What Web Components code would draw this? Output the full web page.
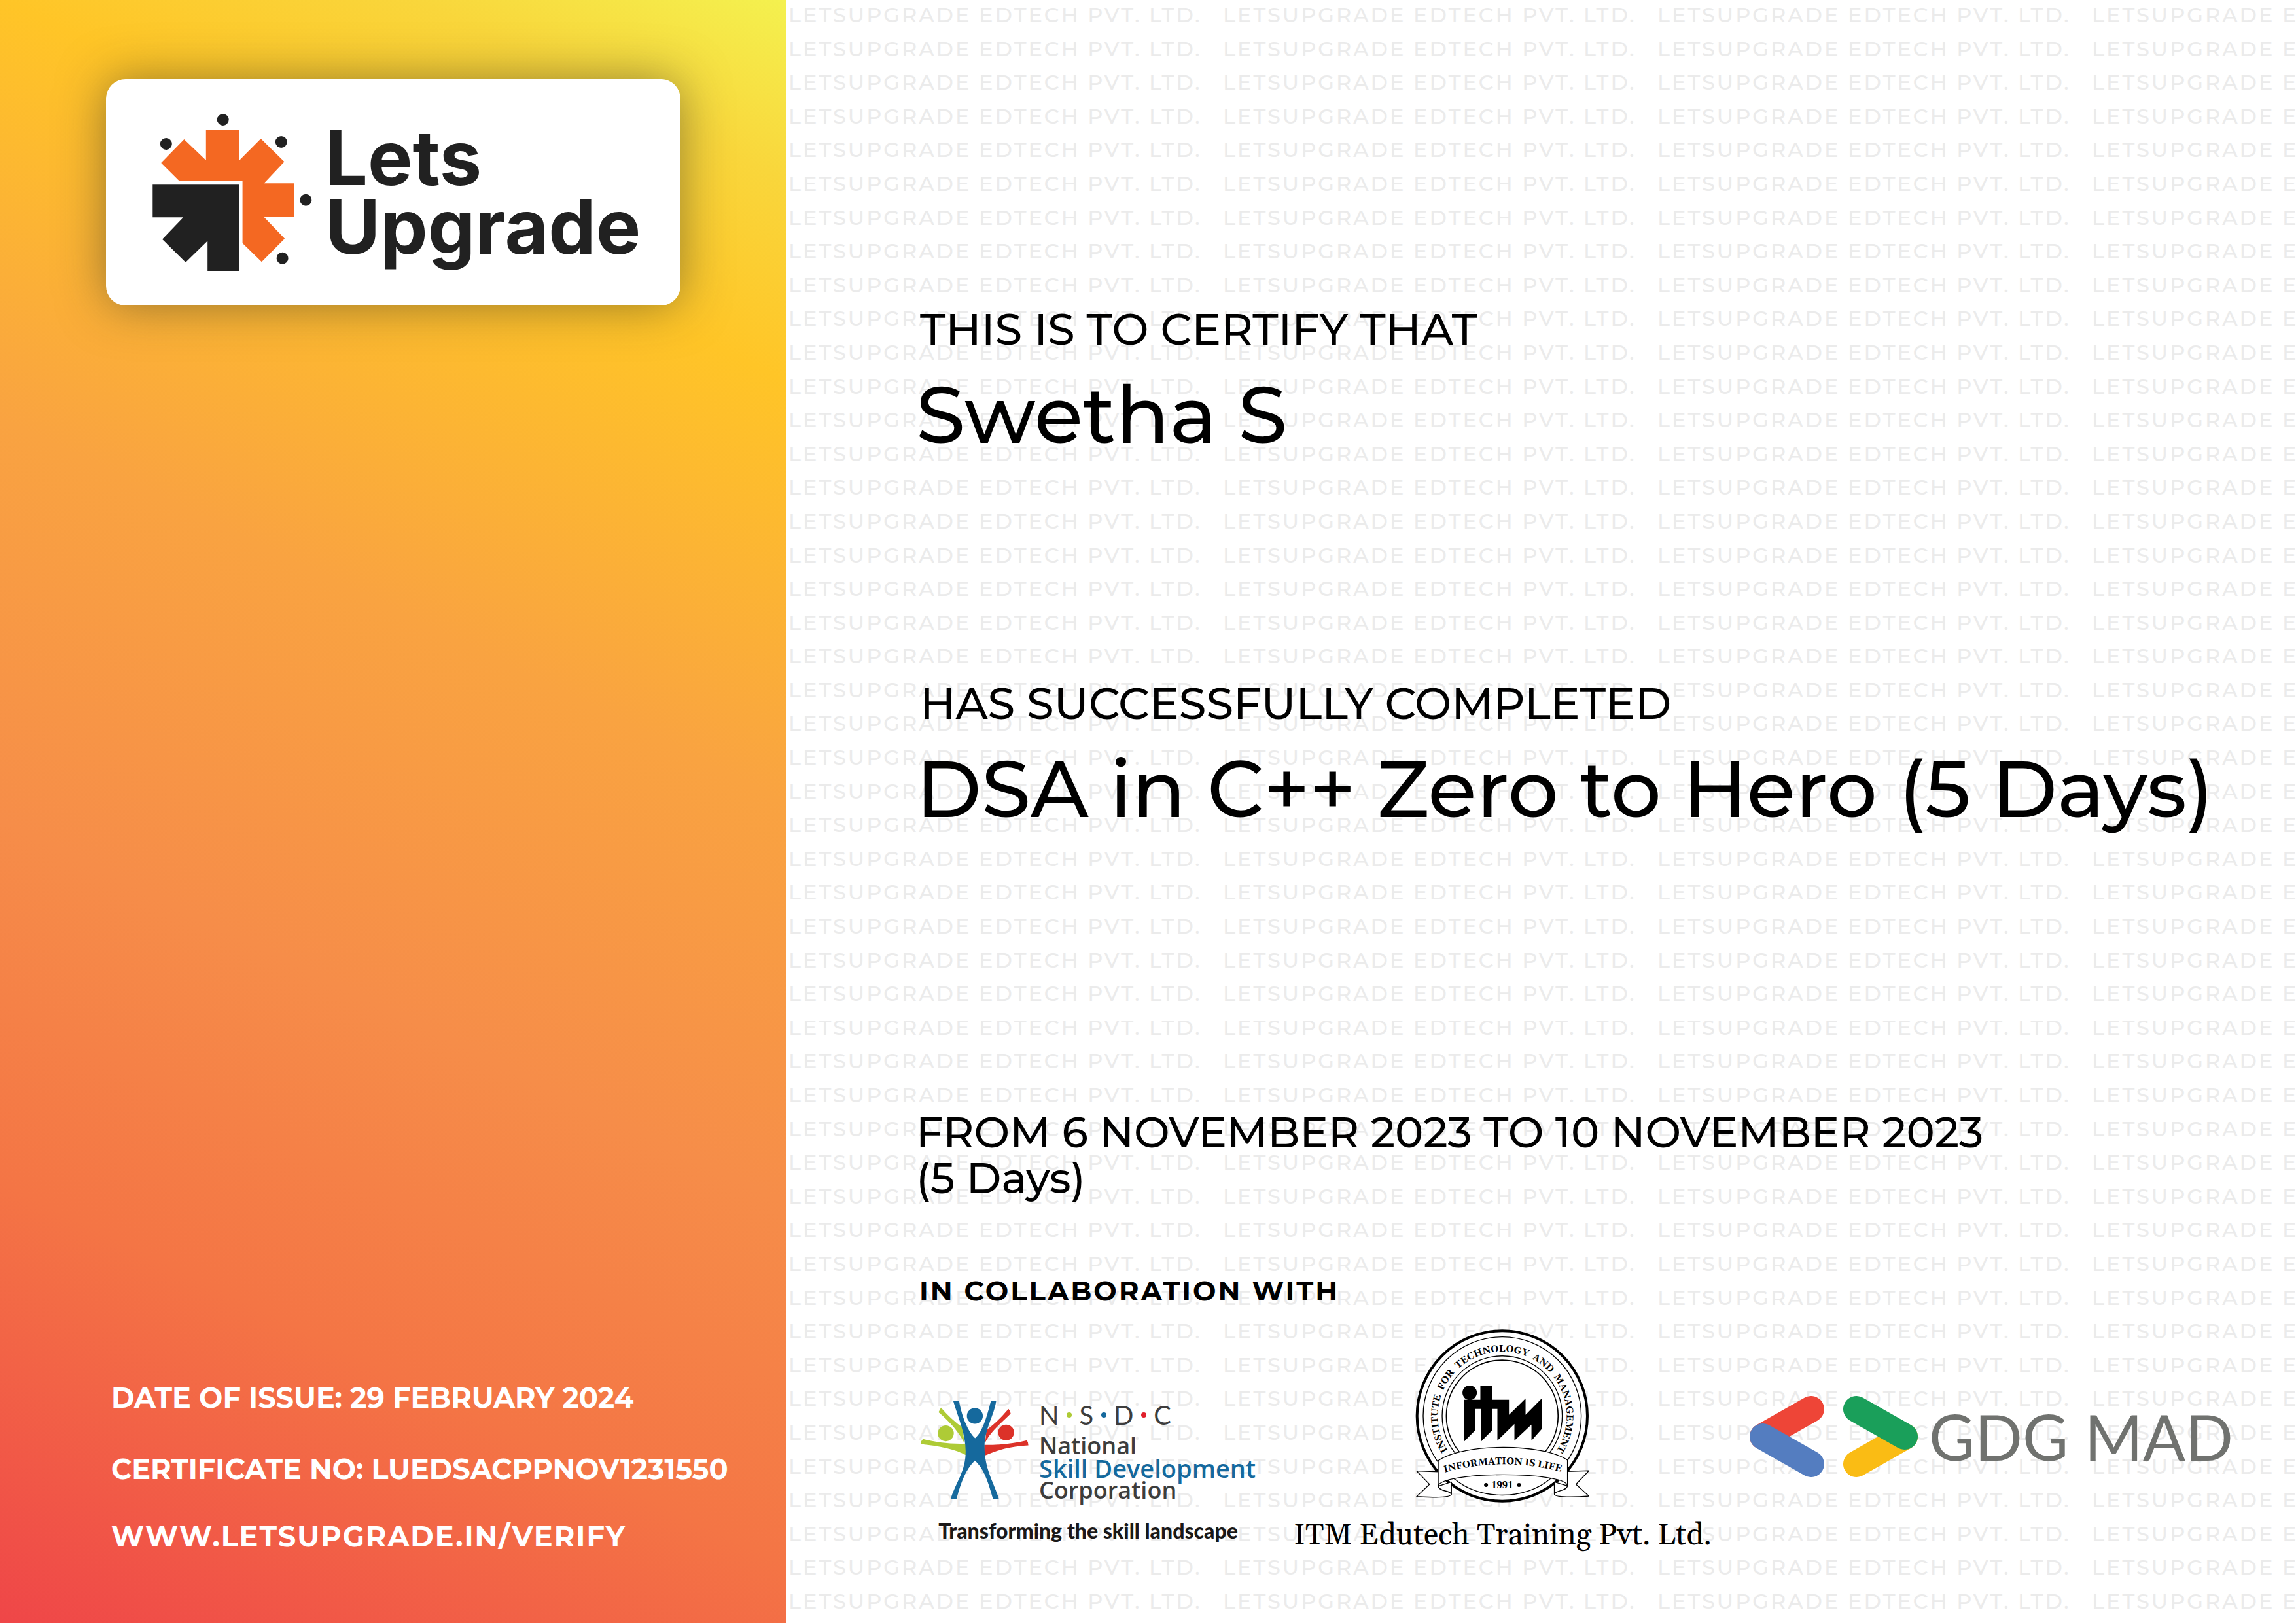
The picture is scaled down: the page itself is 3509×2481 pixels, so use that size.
<!DOCTYPE html>
<html lang="en">
<head>
<meta charset="utf-8">
<title>Certificate of completion</title>
<style>
  html, body { margin: 0; background: #fff; }
  body { font-family: Montserrat, Inter, sans-serif; color: #000; }
</style>
</head>
<body>
<certificate-page>
  <issuer-panel slot="panel">
    <lets-upgrade-logo slot="logo"></lets-upgrade-logo>
    <span slot="date">DATE OF ISSUE: 29 FEBRUARY 2024</span>
    <span slot="number">CERTIFICATE NO: LUEDSACPPNOV1231550</span>
    <span slot="verify">WWW.LETSUPGRADE.IN/VERIFY</span>
  </issuer-panel>
  <water-mark slot="backdrop" text="LETSUPGRADE EDTECH PVT. LTD." rows="48" columns="4"></water-mark>
  <certificate-body>
    <certified-item>
      <span slot="label">THIS IS TO CERTIFY THAT</span>
      Swetha S
    </certified-item>
    <certified-item>
      <span slot="label">HAS SUCCESSFULLY COMPLETED</span>
      DSA in C++ Zero to Hero (5 Days)
    </certified-item>
    <span slot="period">FROM 6 NOVEMBER 2023 TO 10 NOVEMBER 2023<br>(5 Days)</span>
    <span slot="partners-title">IN COLLABORATION WITH</span>
    <nsdc-logo slot="partners"></nsdc-logo>
    <itm-logo slot="partners">ITM Edutech Training Pvt. Ltd.</itm-logo>
    <gdg-logo slot="partners">GDG MAD</gdg-logo>
  </certificate-body>
</certificate-page>

<script>
const define = (name, html, setup) => {
  const template = document.createElement('template');
  template.innerHTML = html;
  customElements.define(name, class extends HTMLElement {
    constructor() {
      super();
      this.attachShadow({ mode: 'open' }).append(template.content.cloneNode(true));
    }
    connectedCallback() { if (setup) setup(this, this.shadowRoot); }
  });
};

define('certificate-page', `
  <style>
    :host { display: grid; grid-template-columns: minmax(0, 1202fr) minmax(0, 2307fr); min-height: 100vh; overflow: hidden; }
    .panel { display: grid; }
    .sheet { display: grid; grid-template-columns: minmax(0, 1fr); overflow: hidden; }
    .backdrop, .content { grid-area: 1 / 1; display: grid; grid-template-columns: minmax(0, 1fr); }
  </style>
  <aside class="panel"><slot name="panel"></slot></aside>
  <main class="sheet">
    <div class="backdrop" aria-hidden="true"><slot name="backdrop"></slot></div>
    <div class="content"><slot></slot></div>
  </main>`);

define('water-mark', `
  <style>
    :host { display: flex; flex-direction: column; justify-content: space-between; overflow: hidden;
      padding: 3px 0 13px 3px; color: #ebebeb; font-size: 32px; font-weight: 500; line-height: 40px; letter-spacing: 3px; user-select: none; }
    div { display: flex; white-space: nowrap; }
    span { flex: 0 0 664px; }
  </style>`, (host, root) => {
  for (let r = 0; r < +host.getAttribute('rows'); r++) {
    const row = document.createElement('div');
    for (let c = 0; c < +host.getAttribute('columns'); c++) {
      const cell = document.createElement('span');
      cell.textContent = host.getAttribute('text');
      row.append(cell);
    }
    root.append(row);
  }
});

define('issuer-panel', `
  <style>
    :host { display: flex; flex-direction: column; justify-content: space-between; box-sizing: border-box;
      padding: 121px 0 106px; color: #fff; font-weight: 700; font-size: 43px; line-height: 53px;
      background: linear-gradient(26deg, #ef4648 0%, #f47545 22%, #f68d49 40%, #f9a341 60%, #ffc527 81%, #f9d63b 91%, #f4f14f 100%); }
    header { padding: 0 162px; }
    footer { padding-left: 170px; white-space: nowrap; }
    p { margin: 0 0 56px; }
    p:last-of-type { margin-bottom: 50px; }
    a { display: block; color: inherit; text-decoration: none; letter-spacing: 2px; }
  </style>
  <header><slot name="logo"></slot></header>
  <footer>
    <p><slot name="date"></slot></p>
    <p><slot name="number"></slot></p>
    <a href="#verify"><slot name="verify"></slot></a>
  </footer>`);

define('lets-upgrade-logo', `
  <style>
    :host { display: flex; align-items: center; gap: 20px; box-sizing: border-box; height: 346px; padding: 0 0 0 71px;
      border-radius: 30px; background: #fff; box-shadow: 0 0 72px rgba(50, 50, 40, .5);
      color: #212121; font: 700 115px/105px Inter, sans-serif; }
    svg { flex: none; width: 244px; height: 241px; }
  </style>
  <svg viewBox="233 174 244 241" aria-hidden="true">
    <path fill="#f46822" d="M314.8 198.3H365.9V245L398.7 212L434.5 247.3L403.4 280.3H449.2V331.7H403.4L435.1 364.7L399.9 400.3L370.6 371.7V277H274.4L246.2 249L281.4 213L314.8 245Z"/>
    <path fill="#212121" d="M233.3 282.3H365.9V414.3H317.2V368.3L283.7 401L248 365.7L280.2 332.3H233.3Z"/>
    <g fill="#212121"><circle cx="340.7" cy="183" r="9"/><circle cx="253.8" cy="220" r="9"/><circle cx="429.8" cy="217" r="9"/><circle cx="467.4" cy="305.7" r="9"/><circle cx="431.6" cy="394.7" r="9"/></g>
  </svg>
  <div>Lets<br>Upgrade</div>`);

define('certificate-body', `
  <style>
    :host { display: flex; flex-direction: column; box-sizing: border-box; padding: 463px 0 0 198px; font-weight: 500; }
    .items { display: flex; flex-direction: column; gap: 328px; }
    .period { margin: 417px 0 0; font-size: 65px; line-height: 70px; }
    h2 { margin: 112px 0 33px; padding-left: 5px; font-size: 42px; line-height: 50px; font-weight: 700; letter-spacing: 3px; }
    .partners { display: flex; align-items: flex-end; gap: 58px; padding-left: 7px; white-space: nowrap; }
  </style>
  <div class="items"><slot></slot></div>
  <p class="period"><slot name="period"></slot></p>
  <h2><slot name="partners-title"></slot></h2>
  <div class="partners"><slot name="partners"></slot></div>`);

define('certified-item', `
  <style>
    :host { display: flex; flex-direction: column; gap: 18px; white-space: nowrap; }
    p { margin: 0; padding-left: 6px; font-size: 67px; line-height: 80px; }
    h1 { margin: 0; font-size: 121px; line-height: 146px; font-weight: 500; }
  </style>
  <p><slot name="label"></slot></p>
  <h1><slot></slot></h1>`);

define('nsdc-logo', `
  <style>
    :host { display: flex; flex-direction: column; align-items: center; gap: 25px; padding-bottom: 16px; }
    .lockup { display: flex; align-items: center; gap: 16px; }
    svg { width: 165px; height: 151px; }
    .initials { display: flex; align-items: center; justify-content: space-between; width: 202px; margin-bottom: 5px;
      font: 400 40px/50px Lato, sans-serif; color: #3d3d3d; }
    .initials i { width: 8px; height: 8px; border-radius: 50%; background: var(--dot); }
    .name { color: #3d3d3d; font: 600 36px/34px "Open Sans", sans-serif; }
    .name b { display: block; color: #15699d; font-weight: 600; font-size: 38px; }
    .tagline { margin: 0; color: #1a1818; font: 900 32px/40px Lato, sans-serif; }
  </style>
  <div class="lockup">
    <svg viewBox="74 118 446 452" preserveAspectRatio="none" aria-hidden="true">
      <g fill="#aecb36"><ellipse cx="178" cy="268" rx="33" ry="36"/>
        <path d="M158 150L148 171C200 220 230 262 254 310L248 242C215 215 190 190 158 150Z"/>
        <path d="M84 294Q75 302 74 317C150 325 220 342 262 368L260 315C200 318 130 308 84 294Z"/></g>
      <g fill="#dc3229"><ellipse cx="427" cy="264" rx="33" ry="36"/>
        <path d="M437 156Q445 164 446 178C400 228 365 258 341 309L346 252C390 215 410 190 437 156Z"/>
        <path d="M513 300Q519 310 519 323C440 328 400 342 336 371L337 321C400 322 460 315 513 300Z"/></g>
      <g fill="#15699d"><ellipse cx="298" cy="188" rx="33" ry="36"/>
        <path d="M209 121Q221 117 233 121C246 200 272 262 299 290C330 262 348 190 364 121Q375 117 386 121C376 190 338 250 338 330C338 430 375 490 397 566Q386 571 373 569C350 480 335 430 298 393C255 440 240 500 222 568Q211 572 198 567C225 480 260 440 260 350C260 270 230 200 209 121Z"/></g>
    </svg>
    <div>
      <div class="initials"><span>N</span><i style="--dot:#aecb36"></i><span>S</span><i style="--dot:#15699d"></i><span>D</span><i style="--dot:#e01f2b"></i><span>C</span></div>
      <div class="name">National <b>Skill Development</b> Corporation</div>
    </div>
  </div>
  <p class="tagline">Transforming the skill landscape</p>`);

define('itm-logo', `
  <style>
    :host { display: flex; flex-direction: column; align-items: center; gap: 22px; font: 400 46px/56px Gelasio, "Liberation Serif", serif; }
    svg { width: 267px; height: 267px; }
    text { font-family: Gelasio, "Liberation Serif", serif; font-weight: 700; }
  </style>
  <svg viewBox="128 60 800 800">
    <defs>
      <path id="ring" d="M284 629A295 295 0 1 1 768 629"/>
      <path id="motto" d="M262 719Q526 645 796 716"/>
    </defs>
    <g fill="none" stroke="#000">
      <circle cx="526" cy="460" r="390" fill="#fff" stroke-width="12"/>
      <circle cx="526" cy="460" r="362" stroke-width="4"/>
      <circle cx="526" cy="460" r="275" stroke-width="4"/>
      <circle cx="526" cy="460" r="256" stroke-width="5"/>
    </g>
    <path fill="#fff" d="M275 640H777V745C690 850 360 850 305 745Z"/>
    <path fill="none" stroke="#000" stroke-width="4" d="M305 746C420 848 632 848 748 746"/>
    <g fill="#fff" stroke="#000" stroke-width="4" stroke-linejoin="round">
      <path d="M236 716L134 712L193 773L134 829C190 832 292 838 293 818V765L236 782Z"/>
      <path d="M823 714L923 711L864 773L923 827C860 832 766 834 765 818V765L823 782Z"/>
      <path d="M233 782C238 808 292 800 293 820V762Z"/>
      <path d="M825 780C820 806 766 800 765 820V762Z"/>
      <path d="M233 782V665C350 584 710 584 825 662V780C820 712 240 712 233 782Z"/>
    </g>
    <circle cx="377" cy="354" r="33"/>
    <path d="M352 386H426V322H480V386H557V455L633 380V455L707 380V520L660 573V500L582 573V497L504 573V428H480V526L428 578V428H403V525L352 577Z"/>
    <text font-size="44" text-anchor="middle"><textPath href="#ring" startOffset="50%">INSTITUTE&#160; FOR&#160; TECHNOLOGY&#160; AND&#160; MANAGEMENT</textPath></text>
    <text font-size="44" text-anchor="middle"><textPath href="#motto" startOffset="50%">INFORMATION IS LIFE</textPath></text>
    <text x="526" y="791" font-size="50" text-anchor="middle" style="font-family:'Liberation Serif',serif">1991</text>
    <circle cx="452" cy="776" r="9"/><circle cx="603" cy="776" r="9"/>
  </svg>
  <div><slot></slot></div>`);

define('gdg-logo', `
  <style>
    :host { display: flex; align-items: center; align-self: center; gap: 17px; padding-bottom: 16px; color: #70726f; font: 400 96px/116px Lato, sans-serif; }
    svg { width: 257px; height: 124px; }
  </style>
  <svg viewBox="31 31 257 124" fill="none" stroke-width="40" stroke-linecap="round" aria-hidden="true">
    <path stroke="#ee4537" d="M51 93L125 51"/><path stroke="#547dc0" d="M51 93L125 135"/>
    <path stroke="#fabc14" d="M268 93L194 135"/><path stroke="#1a9f5a" d="M268 93L194 51"/>
  </svg>
  <span><slot></slot></span>`);
</script>
</body>
</html>
